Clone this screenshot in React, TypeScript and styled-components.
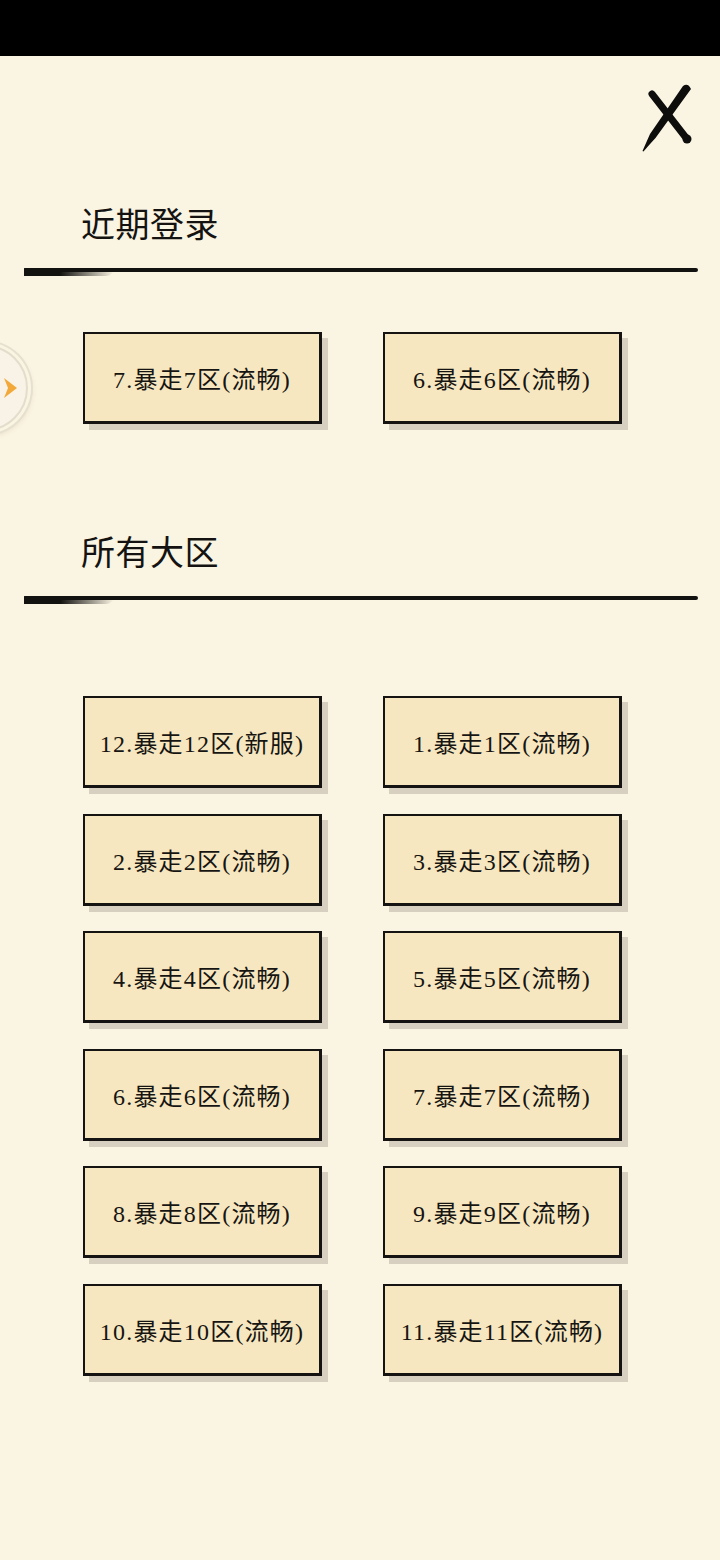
import React from 'react';
import styled, { createGlobalStyle } from 'styled-components';

const GlobalStyle = createGlobalStyle`
  html, body {
    margin: 0;
    padding: 0;
    background: #faf4e2;
  }
`;

const StatusBar = styled.div`
  height: 56px;
  background: #000;
`;

const Page = styled.div`
  position: relative;
  min-height: 1504px;
  background: #faf4e2;
  font-family: "Liberation Serif", "Noto Sans CJK SC", serif;
  color: #1c1b18;
  overflow: hidden;
`;

const TopBar = styled.div`
  display: flex;
  justify-content: flex-end;
  padding: 28px 28px 0 0;
  height: 72px;
`;

const SectionTitle = styled.h2<{ $top: number }>`
  margin: ${(p) => p.$top}px 0 0 81px;
  font-size: 34px;
  font-weight: 400;
  line-height: 40px;
  letter-spacing: 0.5px;
  color: #141311;
`;

const Divider = styled.div`
  position: relative;
  margin: 22px 22px 0 24px;
  height: 4px;
  background: #121210;
  border-radius: 2px;

  &::before {
    content: '';
    position: absolute;
    left: 0;
    top: 0;
    width: 90px;
    height: 8px;
    background: linear-gradient(90deg, #121210 40%, rgba(18, 18, 16, 0));
    border-radius: 4px 0 60px 4px;
  }
`;

const Grid = styled.div<{ $top: number }>`
  display: grid;
  grid-template-columns: 239px 239px;
  column-gap: 61px;
  row-gap: 25.5px;
  margin: ${(p) => p.$top}px 0 0 83px;
`;

const ZoneButton = styled.button`
  position: relative;
  box-sizing: border-box;
  width: 239px;
  height: 92px;
  padding: 0;
  border: 3px solid #151412;
  border-top-width: 2px;
  border-left-width: 2px;
  background: #f7e7c0;
  box-shadow: 6px 6px 0 #d7d0c0;
  font-family: "Liberation Serif", "Noto Sans CJK SC", serif;
  font-size: 24px;
  letter-spacing: 1.2px;
  color: #161512;
  cursor: pointer;
`;

const SideTab = styled.div`
  position: absolute;
  left: -58px;
  top: 289px;
  width: 86px;
  height: 86px;
  border-radius: 50%;
  border: 2px solid #e3ddcd;
  background: #f8f3e6;
  box-shadow: 0 0 0 3px #faf4e2, 0 0 0 5px #e6e0d0, 2px 3px 6px rgba(120, 100, 60, 0.25);
  display: flex;
  align-items: center;
  justify-content: flex-end;
  padding-right: 8px;
  box-sizing: border-box;
`;

// brush-style close mark: the "/" stroke thins out toward its lower end
const CloseIcon = () => (
  <svg width="52" height="70" viewBox="0 0 52 70">
    <path d="M12 10 L47 55" stroke="#0d0d0c" strokeWidth="7" strokeLinecap="round" fill="none" />
    <circle cx="47" cy="55" r="4.5" fill="#0d0d0c" />
    <path d="M43 2 Q48 -1.5 51 5 L15.5 54 Q9 61 3.5 67.5 L2.5 67 Q6 59 10 50 Z" fill="#0d0d0c" />
  </svg>
);

const Arrow = () => (
  <svg width="16" height="24" viewBox="0 0 16 24">
    <path d="M2 2 L15 12 L2 22 L6 12 Z" fill="#f3a93a" />
  </svg>
);

const recent = ['7.暴走7区(流畅)', '6.暴走6区(流畅)'];

const zones = [
  '12.暴走12区(新服)',
  '1.暴走1区(流畅)',
  '2.暴走2区(流畅)',
  '3.暴走3区(流畅)',
  '4.暴走4区(流畅)',
  '5.暴走5区(流畅)',
  '6.暴走6区(流畅)',
  '7.暴走7区(流畅)',
  '8.暴走8区(流畅)',
  '9.暴走9区(流畅)',
  '10.暴走10区(流畅)',
  '11.暴走11区(流畅)',
];

export default function App() {
  return (
    <>
      <GlobalStyle />
      <StatusBar />
      <Page>
        <TopBar>
          <CloseIcon />
        </TopBar>
        <SectionTitle $top={50}>近期登录</SectionTitle>
        <Divider />
        <Grid $top={60}>
          {recent.map((z) => (
            <ZoneButton key={z}>{z}</ZoneButton>
          ))}
        </Grid>
        <SideTab>
          <Arrow />
        </SideTab>
        <SectionTitle $top={110}>所有大区</SectionTitle>
        <Divider />
        <Grid $top={96}>
          {zones.map((z) => (
            <ZoneButton key={z}>{z}</ZoneButton>
          ))}
        </Grid>
      </Page>
    </>
  );
}
